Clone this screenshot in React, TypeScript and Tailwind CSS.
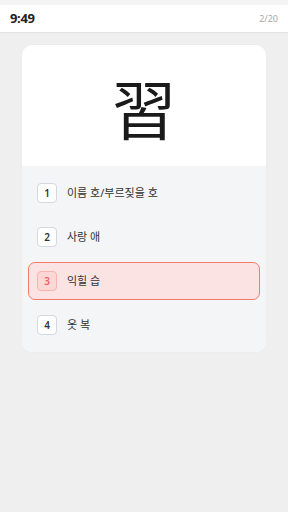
import React from 'react';

const options = [
  { n: 1, label: '이름 호/부르짖을 호' },
  { n: 2, label: '사랑 애' },
  { n: 3, label: '익힐 습', selected: true },
  { n: 4, label: '옷 복' },
];

export default function App() {
  return (
    <div
      className="min-h-[512px] bg-[#efefef] text-[#333]"
      style={{ fontFamily: '"Noto Sans", "Noto Sans CJK KR", sans-serif' }}
    >
      <div className="h-[5px] bg-[#f4f4f4]" />
      <header className="h-[28px] bg-white border-b border-[#e2e2e2] flex items-center justify-between px-[10px]">
        <span className="text-[13px] font-bold text-[#222] tracking-tight">9:49</span>
        <span className="text-[9px] text-[#a8a8a8]">2/20</span>
      </header>
      <main className="px-[22px] pt-[12px]">
        <div className="rounded-[10px] overflow-hidden bg-white shadow-[0_0_2px_rgba(0,0,0,0.04)]">
          <div className="h-[121px] flex items-center justify-center">
            <span
              className="text-[64px] leading-none text-[#1a1a1a] font-normal"
              style={{ fontFamily: '"Noto Sans CJK JP", "Noto Sans CJK SC", serif' }}
            >
              習
            </span>
          </div>
          <div className="bg-[#f3f5f7] px-[6px] py-[8px] flex flex-col gap-[6px]">
            {options.map((o) => (
              <div
                key={o.n}
                className={
                  o.selected
                    ? 'h-[38px] rounded-[7px] border-[1.5px] border-[#f57a6a] bg-[#fbe3e3] flex items-center pl-[8px] gap-[10px]'
                    : 'h-[38px] rounded-[7px] border-[1.5px] border-transparent flex items-center pl-[8px] gap-[10px]'
                }
              >
                <span
                  className={
                    o.selected
                      ? 'w-[20px] h-[20px] rounded-[4px] border border-[#f9b4ae] bg-[#fbd8d6] text-[#f0605a] text-[10px] font-semibold flex items-center justify-center'
                      : 'w-[20px] h-[20px] rounded-[4px] border border-[#d5d8dc] bg-white text-[#333] text-[10px] font-semibold flex items-center justify-center'
                  }
                >
                  {o.n}
                </span>
                <span className="text-[11px] text-[#333]">{o.label}</span>
              </div>
            ))}
          </div>
        </div>
      </main>
    </div>
  );
}
